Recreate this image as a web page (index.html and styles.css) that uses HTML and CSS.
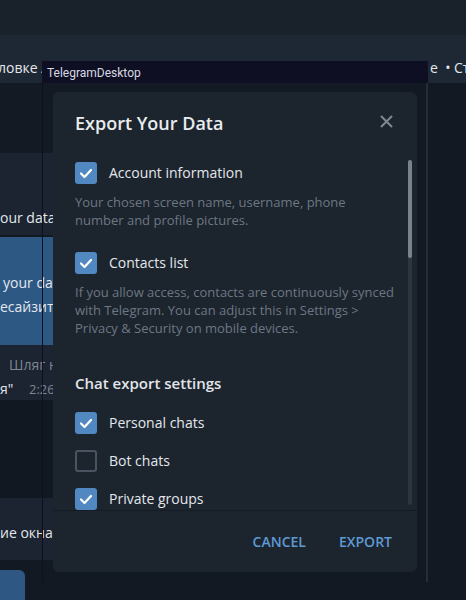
FILE: index.html
```html
<!DOCTYPE html>
<html lang="en">
<head>
<meta charset="utf-8">
<title>Export Your Data</title>
<link rel="stylesheet" href="styles.css">
</head>
<body>
<div class="page">
  <div class="topbar"></div>
  <div class="tabs">
    <span class="tab-left">ловке Автора</span>
    <span class="tab-right">е &nbsp;• Статьи</span>
  </div>
  <div class="feed">
    <div class="blank b1"></div>
    <div class="row r1"><div class="line">our data? Export</div></div>
    <div class="sep"></div>
    <div class="bubble">
      <div class="line l1">your data export</div>
      <div class="line">есайзить" окно</div>
    </div>
    <div class="row r2">
      <div class="line author">Шляг н</div>
      <div class="line">я" <span class="time">2:26 AM</span></div>
    </div>
    <div class="blank b2"></div>
    <div class="row r3"><div class="line">ие окна за</div></div>
    <div class="gap"></div>
    <div class="btn"></div>
  </div>
</div>

<div class="window">
  <div class="titlebar">TelegramDesktop</div>
  <div class="winbody">
    <div class="dialog">
      <div class="dhead">
        <div class="dtitle">Export Your Data</div>
        <svg class="close" width="13" height="13" viewBox="0 0 13 13"><path d="M1 1L12 12M12 1L1 12" stroke="#7f8892" stroke-width="2" fill="none"/></svg>
      </div>
      <div class="scroll">
        <div class="content">
          <div class="check-row">
            <span class="cb on"><svg width="22" height="22" viewBox="0 0 22 22"><path d="M6 11.5L9.5 15L16 8" stroke="#fff" stroke-width="2.2" fill="none" stroke-linecap="round" stroke-linejoin="round"/></svg></span>
            <span class="label">Account information</span>
          </div>
          <p class="desc d1">Your chosen screen name, username, phone<br>number and profile pictures.</p>
          <div class="check-row">
            <span class="cb on"><svg width="22" height="22" viewBox="0 0 22 22"><path d="M6 11.5L9.5 15L16 8" stroke="#fff" stroke-width="2.2" fill="none" stroke-linecap="round" stroke-linejoin="round"/></svg></span>
            <span class="label">Contacts list</span>
          </div>
          <p class="desc d2">If you allow access, contacts are continuously synced<br>with Telegram. You can adjust this in Settings &gt;<br>Privacy &amp; Security on mobile devices.</p>
          <div class="section">Chat export settings</div>
          <div class="check-row first">
            <span class="cb on"><svg width="22" height="22" viewBox="0 0 22 22"><path d="M6 11.5L9.5 15L16 8" stroke="#fff" stroke-width="2.2" fill="none" stroke-linecap="round" stroke-linejoin="round"/></svg></span>
            <span class="label">Personal chats</span>
          </div>
          <div class="check-row next">
            <span class="cb off"></span>
            <span class="label">Bot chats</span>
          </div>
          <div class="check-row next">
            <span class="cb on"><svg width="22" height="22" viewBox="0 0 22 22"><path d="M6 11.5L9.5 15L16 8" stroke="#fff" stroke-width="2.2" fill="none" stroke-linecap="round" stroke-linejoin="round"/></svg></span>
            <span class="label">Private groups</span>
          </div>
          <div class="check-row next">
            <span class="cb on"><svg width="22" height="22" viewBox="0 0 22 22"><path d="M6 11.5L9.5 15L16 8" stroke="#fff" stroke-width="2.2" fill="none" stroke-linecap="round" stroke-linejoin="round"/></svg></span>
            <span class="label">Private channels</span>
          </div>
        </div>
        <div class="sbar"><div class="thumb"></div></div>
      </div>
      <div class="dfoot">
        <span class="dbtn">CANCEL</span>
        <span class="dbtn">EXPORT</span>
      </div>
    </div>
  </div>
</div>
</body>
</html>
```

FILE: styles.css
```css
html, body {
  margin: 0;
  padding: 0;
}
body {
  background: #121922;
  font-family: "Open Sans", "Noto Sans", sans-serif;
  color: #e3e7eb;
  width: 466px;
  height: 600px;
  overflow: hidden;
  position: relative;
}
.page {
  display: flex;
  flex-direction: column;
}
.topbar {
  height: 35px;
  background: #19212b;
}
.tabs {
  height: 48px;
  background: #1e2834;
  display: flex;
  justify-content: space-between;
  align-items: flex-start;
  padding-top: 23px;
  box-sizing: border-box;
  font-size: 14px;
  line-height: 20px;
  white-space: nowrap;
  overflow: hidden;
}
.tab-left {
  margin-left: -2px;
}
.tab-right {
  width: 36px;
  overflow: hidden;
}
.feed {
  width: 400px;
  display: flex;
  flex-direction: column;
  font-size: 14px;
  white-space: nowrap;
}
.blank {
  background: #121821;
}
.b1 { height: 70px; background: #131a24; }
.b2 { height: 98px; }
.row {
  background: #1b2430;
  overflow: hidden;
}
.line {
  line-height: 20px;
}
.r1 {
  height: 82px;
  padding-top: 55px;
  box-sizing: border-box;
}
.sep {
  height: 2px;
  background: #121821;
}
.bubble {
  height: 108px;
  background: #2d5884;
  padding-top: 34px;
  box-sizing: border-box;
}
.bubble .line {
  line-height: 24px;
}
.bubble .l1 {
  padding-left: 3px;
}
.r2 {
  height: 55px;
  padding-top: 8px;
  box-sizing: border-box;
}
.r2 .line {
  line-height: 24px;
}
.author {
  color: #7c8792;
  padding-left: 9px;
}
.time {
  color: #7c8792;
  font-size: 13px;
  margin-left: 12px;
}
.r3 {
  height: 62px;
  padding-top: 25px;
  box-sizing: border-box;
}
.gap {
  height: 10px;
}
.btn {
  width: 25px;
  height: 30px;
  background: #2e5883;
  border-top-right-radius: 6px;
}

/* window overlay */
.window {
  position: absolute;
  left: 42px;
  top: 61px;
  width: 386px;
  height: 521px;
  display: flex;
  flex-direction: column;
}
.titlebar {
  height: 22px;
  background: #0e0f22;
  color: #d8d9e3;
  font-family: Roboto, "Liberation Sans", sans-serif;
  font-size: 12px;
  line-height: 24px;
  padding-left: 5px;
}
.winbody {
  flex: 1;
  border-left: 1px solid #0b1024;
  border-right: 2px solid #262d37;
  padding: 9px 9px 10px 10px;
}
.dialog {
  width: 364px;
  height: 480px;
  background: #1c242e;
  border-radius: 6px;
  display: flex;
  flex-direction: column;
  overflow: hidden;
}
.dhead {
  height: 62px;
  flex: none;
  display: flex;
  align-items: center;
  justify-content: space-between;
  padding: 0 24px 0 22px;
}
.dtitle {
  font-size: 18px;
  font-weight: 600;
  color: #e8ecef;
}
.close {
  margin-bottom: 3px;
}
.scroll {
  height: 356px;
  flex: none;
  display: flex;
  overflow: hidden;
}
.content {
  flex: 1;
  padding: 8px 0 0 22px;
  overflow: hidden;
}
.check-row {
  display: flex;
  align-items: center;
  gap: 12px;
  height: 22px;
}
.check-row.first {
  margin-top: 19px;
}
.check-row.next {
  margin-top: 16px;
}
.cb {
  width: 22px;
  height: 22px;
  border-radius: 3px;
  box-sizing: border-box;
  flex: none;
  display: block;
}
.cb svg {
  display: block;
}
.cb.on {
  background: #5288c1;
}
.cb.off {
  border: 2px solid #4a5461;
}
.label {
  font-size: 14px;
  line-height: 22px;
  color: #e4e8ec;
}
.desc {
  margin: 9px 0 0;
  font-size: 13px;
  line-height: 18px;
  color: #6c7783;
  white-space: nowrap;
}
.d1 {
  margin-bottom: 23px;
}
.section {
  margin-top: 36px;
  font-size: 15px;
  font-weight: 600;
  line-height: 20px;
  color: #e2e6ea;
}
.sbar {
  width: 4px;
  margin: 6px 5px 5px 0;
  background: #2c3540;
  border-radius: 2px;
  flex: none;
}
.thumb {
  height: 98px;
  background: #7a838d;
  border-radius: 2px;
}
.dfoot {
  flex: 1;
  border-top: 1px solid #151c25;
  display: flex;
  justify-content: flex-end;
  align-items: center;
  gap: 33px;
  padding-right: 25px;
}
.dbtn {
  font-size: 14px;
  font-weight: 600;
  color: #5e9ad3;
}
```
